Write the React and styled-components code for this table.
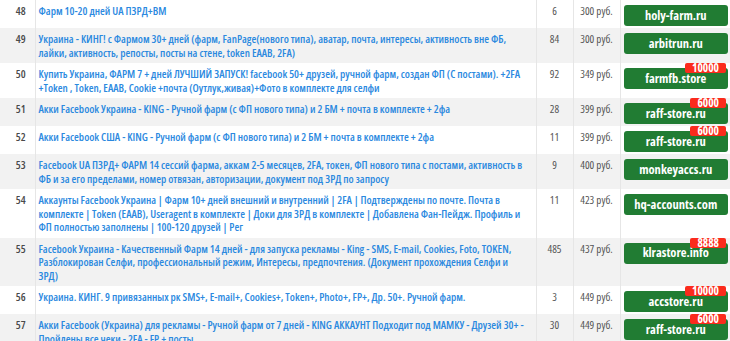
import React from "react";
import styled, { createGlobalStyle } from "styled-components";

const GlobalStyle = createGlobalStyle`
  html, body {
    margin: 0;
    padding: 0;
    background: #ffffff;
  }
  body {
    font-family: "Open Sans", "Noto Sans", sans-serif;
    font-stretch: 75%;
    overflow: hidden;
  }
  * {
    box-sizing: border-box;
  }
`;

const offers = [
  { id: 48, title: "Фарм 10-20 дней UA ПЗРД+ВМ", qty: 6, price: 300, shop: "holy-farm.ru" },
  {
    id: 49,
    title:
      "Украина - КИНГ! с Фармом 30+ дней (фарм, FanPage(нового типа), аватар, почта, интересы, активность вне ФБ, лайки, активность, репосты, посты на стене, token EAAB, 2FA)",
    qty: 84,
    price: 300,
    shop: "arbitrun.ru",
  },
  {
    id: 50,
    title:
      "Купить Украина, ФАРМ 7 + дней ЛУЧШИЙ ЗАПУСК! facebook 50+ друзей, ручной фарм, создан ФП (С постами). +2FA +Token , Token, EAAB, Cookie +почта (Оутлук,живая)+Фото в комплекте для селфи",
    qty: 92,
    price: 349,
    shop: "farmfb.store",
    badge: "10000",
  },
  {
    id: 51,
    title: "Акки Facebook Украина - KING - Ручной фарм (с ФП нового типа) и 2 БМ + почта в комплекте + 2фа",
    qty: 28,
    price: 399,
    shop: "raff-store.ru",
    badge: "6000",
  },
  {
    id: 52,
    title: "Акки Facebook США - KING - Ручной фарм (с ФП нового типа) и 2 БМ + почта в комплекте + 2фа",
    qty: 11,
    price: 399,
    shop: "raff-store.ru",
    badge: "6000",
  },
  {
    id: 53,
    title:
      "Facebook UA ПЗРД+ ФАРМ 14 сессий фарма, аккам 2-5 месяцев, 2FA, токен, ФП нового типа с постами, активность в ФБ и за его пределами, номер отвязан, авторизации, документ под ЗРД по запросу",
    qty: 9,
    price: 400,
    shop: "monkeyaccs.ru",
  },
  {
    id: 54,
    title:
      "Аккаунты Facebook Украина | Фарм 10+ дней внешний и внутренний | 2FA | Подтверждены по почте. Почта в комплекте | Token (EAAB), Useragent в комплекте | Доки для ЗРД в комплекте | Добавлена Фан-Пейдж. Профиль и ФП полностью заполнены | 100-120 друзей | Рег",
    qty: 11,
    price: 423,
    shop: "hq-accounts.com",
  },
  {
    id: 55,
    title:
      "Facebook Украина - Качественный Фарм 14 дней - для запуска рекламы - King - SMS, E-mail, Cookies, Foto, TOKEN, Разблокирован Селфи, профессиональный режим, Интересы, предпочтения. (Документ прохождения Селфи и\nЗРД)",
    qty: 485,
    price: 437,
    shop: "klrastore.info",
    badge: "8888",
  },
  {
    id: 56,
    title: "Украина. КИНГ. 9 привязанных рк SMS+, E-mail+, Cookies+, Token+, Photo+, FP+, Др. 50+. Ручной фарм.",
    qty: 3,
    price: 449,
    shop: "accstore.ru",
    badge: "10000",
  },
  {
    id: 57,
    title:
      "Акки Facebook (Украина) для рекламы - Ручной фарм от 7 дней - KING АККАУНТ Подходит под МАМКУ - Друзей 30+ - Пройдены все чеки - 2FA - FP + посты",
    qty: 30,
    price: 449,
    shop: "raff-store.ru",
    badge: "6000",
  },
];

const Table = styled.table`
  width: 730px;
  border-collapse: collapse;
  table-layout: fixed;
  font-size: 11px;
  line-height: 13.5px;
`;

const Row = styled.tr`
  background: ${(p) => (p.$striped ? "#f2f2f2" : "#ffffff")};
`;

const Cell = styled.td`
  vertical-align: top;
  padding: 4px 5px 4px 3px;
  border-left: 1px solid #e6e6e6;
  color: #555555;
  &:first-child {
    border-left: none;
  }
`;

const NumCell = styled(Cell)`
  width: 35px;
  padding-left: 7px;
  padding-right: 0;
  text-align: center;
  color: #4a4a4a;
  font-weight: 600;
`;

const CenterCell = styled(Cell)`
  width: ${(p) => p.$w}px;
  padding-left: 0;
  padding-right: 0;
  text-align: center;
`;

const ShopCell = styled(Cell)`
  width: 110px;
  padding: 5px 2px 2px 3px;
`;

const Title = styled.a`
  color: #2b89df;
  font-weight: 600;
  text-decoration: none;
  white-space: pre-line;
`;

const ShopWrap = styled.div`
  position: relative;
`;

const ShopButton = styled.a`
  display: flex;
  align-items: center;
  justify-content: center;
  height: 21px;
  border-radius: 3px;
  background: #217c33;
  color: #ffffff;
  font-size: 12.5px;
  font-weight: 700;
  text-decoration: none;
`;

const Badge = styled.span`
  position: absolute;
  top: -5px;
  right: 2px;
  height: 10px;
  padding: 0 7px;
  border-radius: 2px;
  background: #fb2b1c;
  color: #ffffff;
  font-size: 11.5px;
  font-weight: 700;
  line-height: 10px;
`;

export default function App() {
  return (
    <>
      <GlobalStyle />
      <Table>
        <tbody>
          {offers.map((o, i) => (
            <Row key={o.id} $striped={i % 2 === 1}>
              <NumCell>{o.id}</NumCell>
              <Cell>
                <Title href="#">{o.title}</Title>
              </Cell>
              <CenterCell $w={37}>{o.qty}</CenterCell>
              <CenterCell $w={47}>{o.price} руб.</CenterCell>
              <ShopCell>
                <ShopWrap>
                  <ShopButton href="#">{o.shop}</ShopButton>
                  {o.badge && <Badge>{o.badge}</Badge>}
                </ShopWrap>
              </ShopCell>
            </Row>
          ))}
        </tbody>
      </Table>
    </>
  );
}
